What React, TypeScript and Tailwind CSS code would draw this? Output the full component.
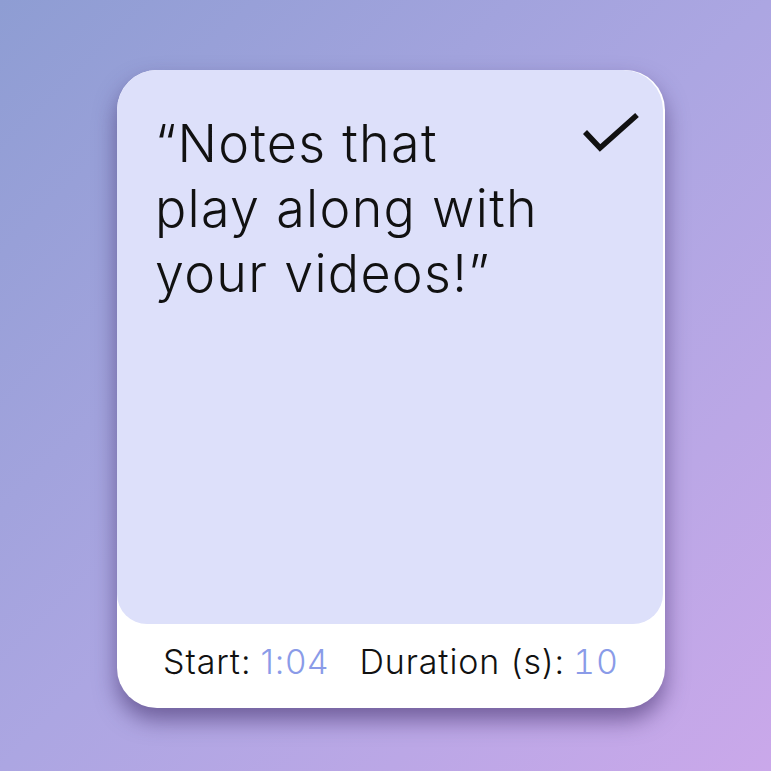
export default function App() {
  return (
    <main className="min-h-screen w-full bg-[linear-gradient(135deg,#8e9dd3_0%,#aca6e2_50%,#caa8ea_100%)] pl-[117px] pt-[70px] font-['Inter',sans-serif]">
      <div className="flex h-[638px] w-[548px] flex-col rounded-[40px] bg-white shadow-[0_12px_22px_rgba(55,35,95,0.55)]">
        <div className="relative h-[554px] w-[546px] rounded-t-[40px] rounded-b-[30px] bg-[#dde0fa] pl-[38px] pt-[41px]">
          <p className="text-[52px] font-light leading-[65px] tracking-[1.3px] text-[#111]">
            “Notes that
            <br />
            play along with
            <br />
            your videos!”
          </p>
          <svg
            className="absolute left-[466px] top-[42px]"
            width="56"
            height="42"
            viewBox="0 0 56 42"
            fill="none"
          >
            <path d="M2 20 L17 36 L54 3" stroke="#111" strokeWidth="5.5" strokeLinecap="butt" strokeLinejoin="miter" />
          </svg>
        </div>
        <div className="flex flex-1 items-center pl-[46px] pb-[10px] text-[34px] font-light tracking-[0.9px] text-[#111]">
          <span>Start:</span>
          <span className="ml-[9px] text-[#8a9be8]">1:04</span>
          <span className="ml-[30px]">Duration (s):</span>
          <span className="ml-[8px] tabular-nums text-[#8a9be8]">10</span>
        </div>
      </div>
    </main>
  );
}
